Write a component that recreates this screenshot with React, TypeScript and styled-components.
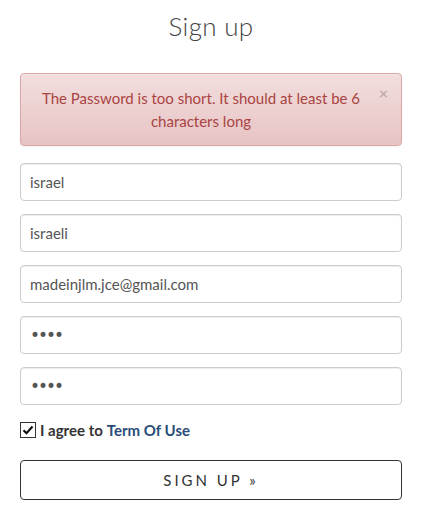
import styled, { createGlobalStyle } from "styled-components";

const GlobalStyle = createGlobalStyle`
  body {
    margin: 0;
    background: #fff;
    font-family: Lato, "Open Sans", sans-serif;
    color: #555;
  }
`;

const Page = styled.div`
  width: 382px;
  margin-left: 20px;
  display: flex;
  flex-direction: column;
`;

const Title = styled.h2`
  margin: 10px 0 0;
  text-align: center;
  font-weight: 300;
  font-size: 26px;
  line-height: 32px;
  color: #444;
  letter-spacing: 0.3px;
`;

const Alert = styled.div`
  position: relative;
  margin-top: 31px;
  padding: 13px 35px 12px 15px;
  border: 1px solid #dca7a7;
  border-radius: 4px;
  background: linear-gradient(to bottom, #f2dede 0%, #e7c3c3 100%);
  box-shadow: inset 0 1px 0 rgba(255, 255, 255, 0.25), 0 1px 2px rgba(0, 0, 0, 0.05);
  color: #a94442;
  text-align: center;
  font-size: 15px;
  line-height: 23px;
`;

const Close = styled.button`
  position: absolute;
  top: 12px;
  right: 12px;
  border: 0;
  background: none;
  padding: 0;
  font-family: "DejaVu Sans", sans-serif;
  font-size: 13px;
  font-weight: bold;
  color: #000;
  opacity: 0.2;
  text-shadow: 0 1px 0 #fff;
`;

const Form = styled.form`
  margin-top: 17px;
  display: flex;
  flex-direction: column;
  gap: 13px;
`;

const Input = styled.input`
  box-sizing: border-box;
  width: 100%;
  height: 38px;
  padding: 0 9px;
  border: 1px solid #ccc;
  border-radius: 4px;
  box-shadow: inset 0 1px 1px rgba(0, 0, 0, 0.075);
  font-family: Lato, "Open Sans", sans-serif;
  font-size: 15px;
  color: #555;
  outline: none;
  &[type="password"] {
    font-family: "DejaVu Sans", sans-serif;
    font-size: 17px;
    letter-spacing: -2px;
  }
`;

const Agree = styled.label`
  margin-top: 3px;
  display: flex;
  align-items: center;
  gap: 4px;
  font-size: 15px;
  font-weight: bold;
  color: #333;
`;

const Box = styled.span`
  box-sizing: border-box;
  width: 16px;
  height: 16px;
  border: 1px solid #333;
  background: #fff;
  display: flex;
  align-items: center;
  justify-content: center;
`;

const Link = styled.a`
  color: #2a4d78;
  text-decoration: none;
`;

const Submit = styled.button`
  box-sizing: border-box;
  margin-top: 8px;
  height: 40px;
  width: 100%;
  border: 1px solid #333;
  border-radius: 4px;
  background: #fff;
  color: #333;
  font-family: Lato, "Open Sans", sans-serif;
  font-size: 15px;
  letter-spacing: 3px;
  text-transform: uppercase;
`;

export default function App() {
  return (
    <>
      <GlobalStyle />
      <Page>
        <Title>Sign up</Title>
        <Alert>
          The Password is too short. It should at least be 6 characters long
          <Close type="button">×</Close>
        </Alert>
        <Form>
          <Input type="text" defaultValue="israel" />
          <Input type="text" defaultValue="israeli" />
          <Input type="email" defaultValue="madeinjlm.jce@gmail.com" />
          <Input type="password" defaultValue="1234" />
          <Input type="password" defaultValue="1234" />
          <Agree>
            <Box>
              <svg width="12" height="12" viewBox="0 0 12 12">
                <path d="M1.5 6.2 L4.5 9.2 L10.5 2.5" fill="none" stroke="#111" strokeWidth="2.2" />
              </svg>
            </Box>
            I agree to <Link href="#">Term Of Use</Link>
          </Agree>
          <Submit type="button">Sign up »</Submit>
        </Form>
      </Page>
    </>
  );
}
